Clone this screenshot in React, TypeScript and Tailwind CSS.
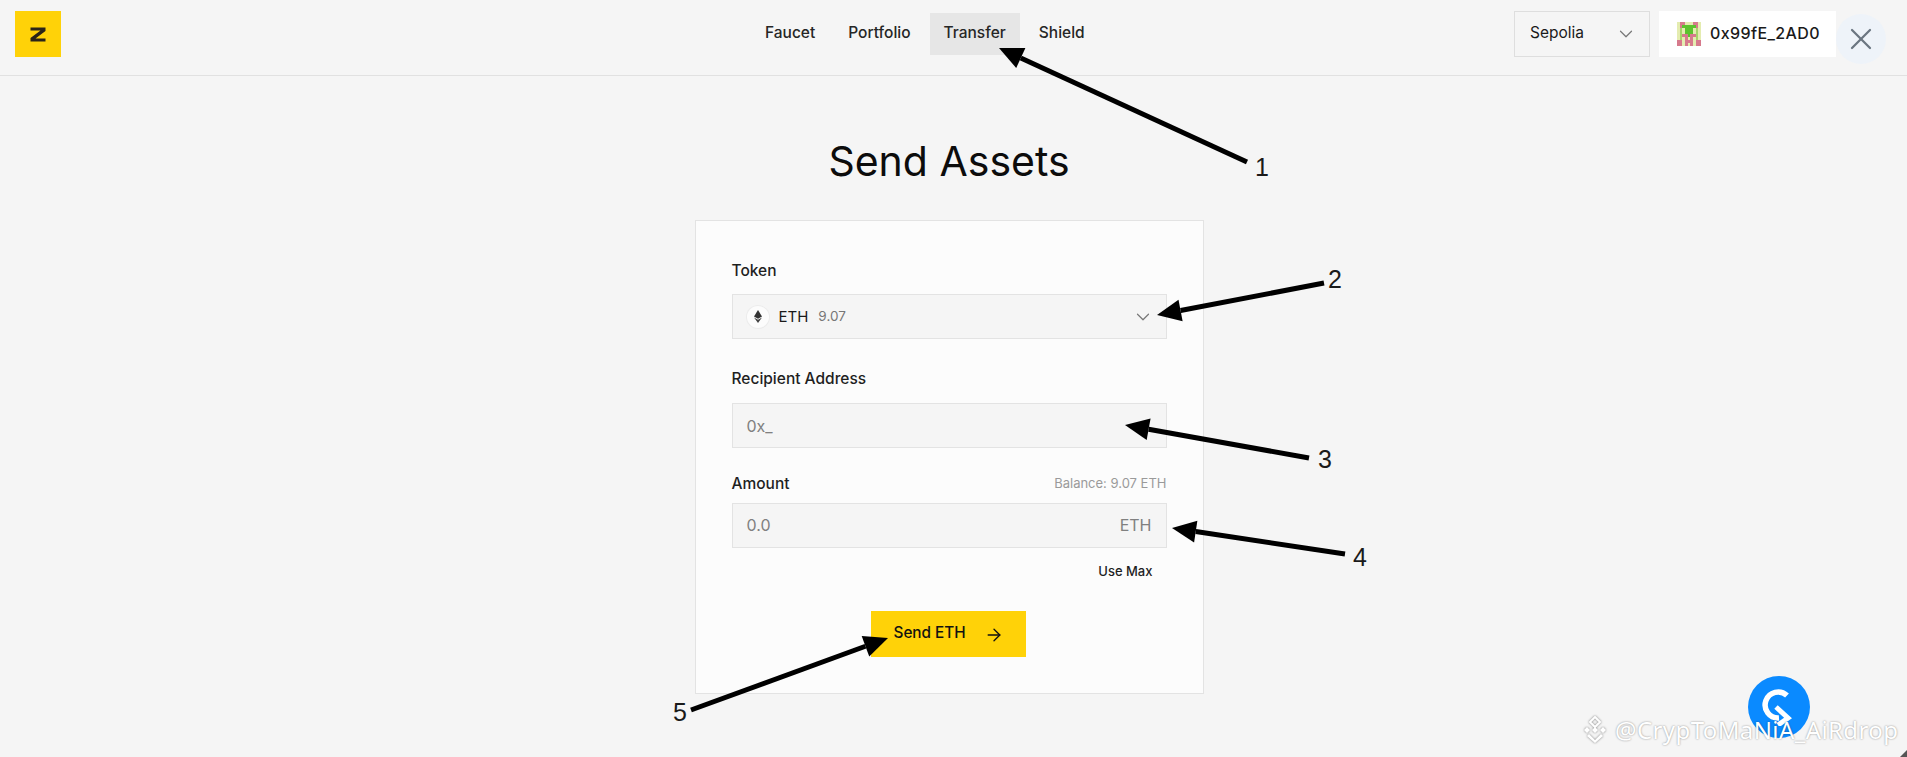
import { ChevronDown, ArrowRight, X } from "lucide-react";

const arrows = [
  { x1: 1247, y1: 162, x2: 999, y2: 48 },
  { x1: 1324, y1: 283, x2: 1157, y2: 315 },
  { x1: 1309, y1: 458, x2: 1125, y2: 425 },
  { x1: 1345, y1: 554, x2: 1172, y2: 528 },
  { x1: 691, y1: 710, x2: 888, y2: 638 },
];

function Annotation({ x1, y1, x2, y2 }: { x1: number; y1: number; x2: number; y2: number }) {
  const a = Math.atan2(y2 - y1, x2 - x1);
  const len = 24;
  const half = 11;
  const bx = x2 - len * Math.cos(a);
  const by = y2 - len * Math.sin(a);
  const nx = -Math.sin(a) * half;
  const ny = Math.cos(a) * half;
  return (
    <g>
      <line x1={x1} y1={y1} x2={bx} y2={by} stroke="#000" strokeWidth={5} />
      <polygon points={`${x2},${y2} ${bx + nx},${by + ny} ${bx - nx},${by - ny}`} fill="#000" />
    </g>
  );
}

const labels = [
  { n: "1", cls: "left-[1255px] top-[153px]" },
  { n: "2", cls: "left-[1328px] top-[265px]" },
  { n: "3", cls: "left-[1318px] top-[445px]" },
  { n: "4", cls: "left-[1353px] top-[543px]" },
  { n: "5", cls: "left-[673px] top-[698px]" },
];

const identicon = [
  "lPPlllPPl".split(""),
  "lPGGGGGPl".split(""),
  "ldlGGGldl".split(""),
  "ldlGGGldl".split(""),
  "ldPPGPPdl".split(""),
  "ldlPlPldl".split(""),
  "PPlPPPlPP".split(""),
  "PPlPlPlPP".split(""),
];
const idColor: Record<string, string> = { l: "#e4ecb0", P: "#d67a8c", G: "#5cc22e", d: "#a6d46a" };

function Identicon() {
  return (
    <svg width="24" height="24" viewBox="0 0 9 8" preserveAspectRatio="none" shapeRendering="crispEdges">
      {identicon.map((row, y) =>
        row.map((c, x) => <rect key={`${x}-${y}`} x={x} y={y} width="1" height="1" fill={idColor[c]} />)
      )}
    </svg>
  );
}

function Label({ children }: { children: string }) {
  return <span className="text-[15.5px] leading-[18px] font-medium text-[#1f1f1f]">{children}</span>;
}

export default function App() {
  return (
    <div className="relative h-screen overflow-hidden bg-[#f5f5f5] font-['Inter',sans-serif] text-[#1a1a1a]">
      <header className="flex h-[76px] items-start border-b border-[#e1e1e1] px-[15px] pt-[11px]">
        <div className="flex h-[46px] w-[46px] items-center justify-center bg-[#ffd208]">
          <svg width="16" height="17" viewBox="0 0 16 17" fill="none">
            <path d="M0.5 1.5H15.5V5L5.5 12.5H15.5V15.5H0.5V12L10.5 4.5H0.5Z" fill="#2a2418" />
          </svg>
        </div>
        <nav className="ml-[690px] flex items-center gap-[5px] pt-[2px] text-[15.5px] font-medium text-[#262626]">
          <a className="flex h-[42px] items-center px-[14px] pb-[2px]">Faucet</a>
          <a className="flex h-[42px] items-center px-[14px] pb-[2px]">Portfolio</a>
          <a className="flex h-[42px] items-center bg-[#e6e6e6] px-[14px] pb-[2px]">Transfer</a>
          <a className="flex h-[42px] items-center px-[14px] pb-[2px]">Shield</a>
        </nav>
        <div className="ml-auto flex items-start gap-[9px] pr-[56px]">
          <div className="flex h-[46px] w-[136px] items-center justify-between border border-[#dedede] pl-[15px] pr-[12px] text-[15.5px]">
            <span className="-translate-y-[1px]">Sepolia</span>
            <ChevronDown size={22} strokeWidth={1.3} className="text-[#777]" />
          </div>
          <div className="relative flex h-[46px] w-[177px] items-center gap-[9px] bg-white pl-[18px] text-[16px] font-medium tracking-[0.4px]">
            <Identicon />
            <span className="-translate-y-[1px]">0x99fE_2AD0</span>
            <div className="absolute left-[177px] top-[3px] flex h-[50px] w-[50px] items-center justify-center rounded-full bg-[#eef3f9]">
              <X size={36} strokeWidth={1.5} className="text-[#6b7681]" />
            </div>
          </div>
        </div>
      </header>

      <main className="flex flex-col items-center pr-[9px]">
        <h1 className="mt-[60px] text-[41px] leading-[50px] font-normal text-[#0c0c0c]">Send Assets</h1>
        <form className="mt-[34px] flex h-[474px] w-[509px] flex-col border border-[#e3e3e3] bg-[#fcfcfc] px-[36px] pt-[41px]">
          <Label>Token</Label>
          <div className="mt-[14px] flex h-[45px] items-center justify-between border border-[#e3e3e3] bg-[#f5f5f5] pl-[14px] pr-[12px]">
            <div className="flex items-center gap-[10px]">
              <span className="flex h-[22px] w-[22px] items-center justify-center rounded-full bg-[#fcfcfc] ring-1 ring-[#ececec]">
                <svg width="8" height="13" viewBox="0 0 8 13">
                  <path d="M4 0L8 6.4L4 8.8L0 6.4Z" fill="#333" />
                  <path d="M4 9.8L8 7.4L4 13L0 7.4Z" fill="#444" />
                </svg>
              </span>
              <span className="text-[15px] leading-none">ETH</span>
              <span className="text-[13.5px] leading-none text-[#777]">9.07</span>
            </div>
            <ChevronDown size={22} strokeWidth={1.3} className="text-[#777]" />
          </div>

          <div className="mt-[27px]"><Label>Recipient Address</Label></div>
          <div className="mt-[13px] flex h-[45px] items-center border border-[#e3e3e3] bg-[#f5f5f5] pl-[14px] text-[16px] text-[#808080]">
            0x_
          </div>

          <div className="mt-[26px] flex items-center justify-between">
            <Label>Amount</Label>
            <span className="text-[13px] text-[#9a9a9a]">Balance: 9.07 ETH</span>
          </div>
          <div className="mt-[9px] flex h-[45px] items-center justify-between border border-[#e3e3e3] bg-[#f5f5f5] px-[14px] text-[16px] text-[#808080]">
            <span>0.0</span>
            <span>ETH</span>
          </div>
          <div className="mt-[15px] flex justify-end pr-[14px]">
            <span className="text-[13px] leading-[16px] font-medium text-[#1f1f1f]">Use Max</span>
          </div>

          <div className="mt-[32px] flex justify-center pr-[2px]">
            <button type="button" className="flex h-[46px] w-[155px] items-center gap-[18px] bg-[#ffd208] pl-[23px] text-[15.3px] font-medium text-[#111]">
              <span>Send ETH</span>
              <ArrowRight size={20} strokeWidth={1.6} className="translate-y-[1px]" />
            </button>
          </div>
        </form>
      </main>

      <svg className="pointer-events-none absolute left-0 top-0" width="1907" height="757">
        {arrows.map((a, i) => (
          <Annotation key={i} {...a} />
        ))}
      </svg>
      {labels.map((l) => (
        <span key={l.n} className={`absolute font-['Liberation_Sans',sans-serif] text-[25px] leading-[28px] text-[#1a1a1a] ${l.cls}`}>
          {l.n}
        </span>
      ))}

      <div className="absolute left-[1748px] top-[676px] flex h-[62px] w-[62px] items-center justify-center rounded-full bg-[#0a8aff]">
        <svg width="34" height="38" viewBox="0 0 34 38" fill="none">
          <path d="M25 7.5A13 13 0 1 0 17 30" stroke="#fff" strokeWidth="5.5" />
          <path d="M14 19L26 30L16 37" stroke="#fff" strokeWidth="5" />
        </svg>
      </div>

      <div className="absolute left-[1581px] top-[716px] flex items-center gap-[6px] text-white [text-shadow:0_0_2px_rgba(0,0,0,0.45)]">
        <svg width="28" height="28" viewBox="0 0 28 28" fill="#fff" className="drop-shadow-[0_0_1px_rgba(0,0,0,0.5)]">
          <path d="M14 1L19 6L14 11L9 6Z" fill="none" stroke="#fff" strokeWidth="2" />
          <path d="M6 11L9 14L6 17L3 14ZM22 11L25 14L22 17L19 14ZM14 11L17 14L14 17L11 14Z" />
          <path d="M8 18L14 24L20 18L22 20L14 27L6 20Z" />
        </svg>
        <span className="font-['Noto_Sans',sans-serif] text-[24px] leading-[28px] tracking-[0.4px]">@CrypToMaNiA_AiRdrop</span>
      </div>

      <div className="absolute bottom-0 right-0 h-[7px] w-[7px] bg-[#555] [clip-path:polygon(100%_0,100%_100%,0_100%)]" />
    </div>
  );
}
